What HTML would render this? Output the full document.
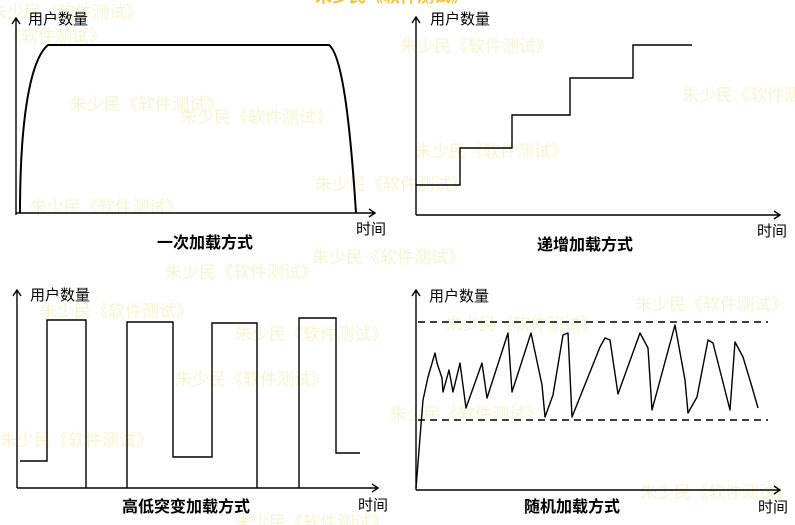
<!DOCTYPE html>
<html><head><meta charset="utf-8"><style>
html,body{margin:0;padding:0;background:#fff;width:795px;height:525px;overflow:hidden}
svg{display:block}
text{font-family:"Liberation Sans","Noto Sans CJK SC",sans-serif}
.wm{fill:#faf3d2;font-size:17px}
.lb{font-size:15px;fill:#000}
.tt{font-size:16px;font-weight:bold;fill:#000}
</style></head><body>
<svg width="795" height="525" viewBox="0 0 795 525">
<g class="wm">
<text x="-10" y="18">朱少民《软件测试》</text>
<text x="4" y="42">《软件测试》</text>
<text x="70" y="110">朱少民《软件测试》</text>
<text x="180" y="123">朱少民《软件测试》</text>
<text x="30" y="213">朱少民《软件测试》</text>
<text x="315" y="190">朱少民《软件测试》</text>
<text x="400" y="52">朱少民《软件测试》</text>
<text x="682" y="101">朱少民《软件测试》</text>
<text x="415" y="157">朱少民《软件测试》</text>
<text x="312" y="263">朱少民《软件测试》</text>
<text x="165" y="278">朱少民《软件测试》</text>
<text x="40" y="317">朱少民《软件测试》</text>
<text x="235" y="340">朱少民《软件测试》</text>
<text x="175" y="385">朱少民《软件测试》</text>
<text x="0" y="446">朱少民《软件测试》</text>
<text x="390" y="420">朱少民《软件测试》</text>
<text x="445" y="330">朱少民《软件测试》</text>
<text x="635" y="310">朱少民《软件测试》</text>
<text x="640" y="498">朱少民《软件测试》</text>
<text x="235" y="528">朱少民《软件测试》</text>
</g>
<text x="315" y="2" style="font-size:17px;font-weight:bold;fill:#f0c040">朱少民《软件测试》</text>
<g stroke="#000" stroke-width="1.4" fill="none">
<path d="M16 215V18M12 24L16 18L20 24"/>
<path d="M16 213H375M369 209L375 213L369 217"/>
<path d="M20 213C20 120 30 60 48 45H329C342 55 350 120 356 213" stroke-width="2"/>
<path d="M416 215V17M412 23L416 17L420 23"/>
<path d="M416 215H780M774 211L780 215L774 219"/>
<path d="M416 185H460V148H512V115H570V78H633V45H692"/>
<path d="M17 488V290M13 296L17 290L21 296"/>
<path d="M17 488H378M372 484L378 488L372 492"/>
<path d="M20 461H47V320H86V488M127 488V322H173V457H212V323H257V488M299 488V318H336V453H360"/>
<path d="M416 490V290M412 296L416 290L420 296"/>
<path d="M416 490H780M774 486L780 490L774 494"/>
<path d="M418 322H768M418 420H768" stroke-dasharray="7,5"/>
<path d="M416 488L423 400L428 377L435 353L437 363L442 378L443 392L449 370L453 392L460 363L466 408L482 363L487 398L508 333L512 392L531 333L542 385L545 417L553 395L563 335L568 333L572 417L600 347L605 338L610 340L618 394L640 333L648 348L652 410L675 325L685 380L688 413L697 397L708 340L713 343L730 410L735 342L743 357L752 387L758 408" stroke-linejoin="round"/>
</g>
<text class="lb" x="28" y="24">用户数量</text>
<text class="lb" x="356" y="234">时间</text>
<text class="tt" x="157" y="248">一次加载方式</text>
<text class="lb" x="430" y="24">用户数量</text>
<text class="lb" x="757" y="236">时间</text>
<text class="tt" x="537" y="250">递增加载方式</text>
<text class="lb" x="30" y="300">用户数量</text>
<text class="lb" x="358" y="510">时间</text>
<text class="tt" x="122" y="512">高低突变加载方式</text>
<text class="lb" x="429" y="301">用户数量</text>
<text class="lb" x="758" y="512">时间</text>
<text class="tt" x="524" y="512">随机加载方式</text>
</svg>
</body></html>
